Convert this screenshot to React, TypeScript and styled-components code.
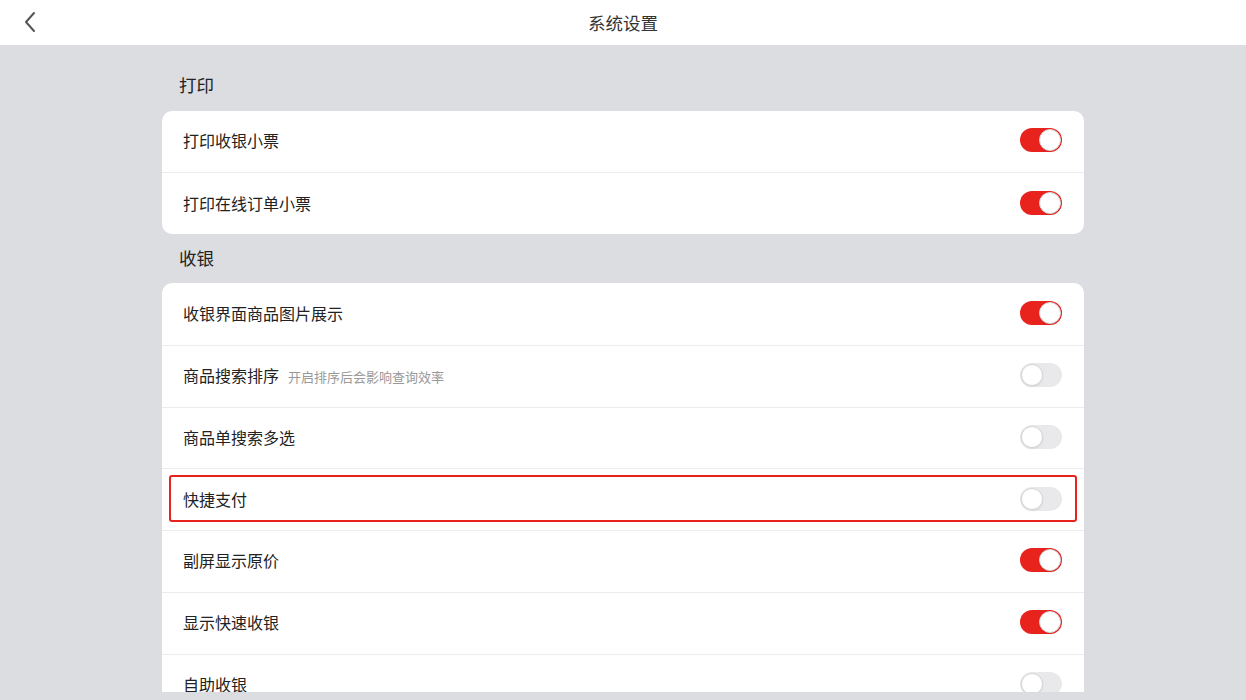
import React from "react";
import styled, { createGlobalStyle } from "styled-components";

const Global = createGlobalStyle`
  html, body { margin: 0; padding: 0; }
  body {
    font-family: "Noto Sans CJK SC", "Noto Sans", sans-serif;
    background: #dcdde1;
  }
`;

const Page = styled.div`
  width: 1246px;
  height: 700px;
  display: flex;
  flex-direction: column;
  background: #dcdde1;
  overflow: hidden;
`;

const Header = styled.header`
  height: 45px;
  flex: none;
  background: #ffffff;
  display: flex;
  align-items: center;
  justify-content: center;
  position: relative;
`;

const BackButton = styled.button`
  position: absolute;
  left: 18px;
  top: 10px;
  width: 24px;
  height: 24px;
  padding: 0;
  border: none;
  background: transparent;
  display: flex;
  align-items: center;
  justify-content: center;
`;

const Title = styled.h1`
  margin: 0;
  font-size: 17.5px;
  font-weight: 400;
  color: #333333;
`;

const Scroll = styled.main`
  flex: 1;
  margin-bottom: 8px;
  overflow: hidden;
  display: flex;
  flex-direction: column;
  align-items: center;
  padding-top: 16px;
`;

const Section = styled.section`
  width: 922px;
  display: flex;
  flex-direction: column;
`;

const SectionTitle = styled.h2`
  margin: 0;
  height: 49.5px;
  line-height: 48px;
  padding-left: 17px;
  font-size: 17.5px;
  font-weight: 400;
  color: #222222;
`;

const Card = styled.div`
  background: #ffffff;
  border-radius: 10px;
  overflow: hidden;
  display: flex;
  flex-direction: column;
`;

const Row = styled.div<{ $highlight?: boolean }>`
  position: relative;
  height: 61.7px;
  box-sizing: border-box;
  flex: none;
  display: flex;
  align-items: center;
  padding: 0 22px 2px 21px;
  border-top: 1px solid #ececee;
  &:first-child { border-top: none; }
  ${(p) =>
    p.$highlight &&
    `
    &::after {
      content: "";
      position: absolute;
      left: 7px;
      right: 7px;
      top: 6px;
      bottom: 8px;
      border: 2.5px solid #e8231e;
      border-radius: 3px;
      pointer-events: none;
    }
  `}
`;

const Label = styled.span`
  flex: 1;
  font-size: 16px;
  color: #222222;
  display: flex;
  align-items: baseline;
  gap: 9px;
`;

const Hint = styled.span`
  font-size: 13px;
  color: #999999;
`;

const Track = styled.span<{ $on: boolean }>`
  width: 42px;
  height: 24px;
  border-radius: 12px;
  box-sizing: border-box;
  background: ${(p) => (p.$on ? "#e8231e" : "#e9e9eb")};
  display: flex;
  align-items: center;
  justify-content: ${(p) => (p.$on ? "flex-end" : "flex-start")};
  padding: 0 1px;
`;

const Knob = styled.span`
  width: 22px;
  height: 22px;
  border-radius: 50%;
  background: #ffffff;
  box-sizing: border-box;
  border: 1px solid #d6d6d8;
  box-shadow: 0 1px 2px rgba(0, 0, 0, 0.08);
`;

const Toggle = ({ on }: { on: boolean }) => (
  <Track $on={on}>
    <Knob />
  </Track>
);

type Item = { label: string; hint?: string; on: boolean; highlight?: boolean };

const sections: { title: string; items: Item[] }[] = [
  {
    title: "打印",
    items: [
      { label: "打印收银小票", on: true },
      { label: "打印在线订单小票", on: true },
    ],
  },
  {
    title: "收银",
    items: [
      { label: "收银界面商品图片展示", on: true },
      { label: "商品搜索排序", hint: "开启排序后会影响查询效率", on: false },
      { label: "商品单搜索多选", on: false },
      { label: "快捷支付", on: false, highlight: true },
      { label: "副屏显示原价", on: true },
      { label: "显示快速收银", on: true },
      { label: "自助收银", on: false },
    ],
  },
];

export default function App() {
  return (
    <>
      <Global />
      <Page>
        <Header>
          <BackButton aria-label="返回">
            <svg width="14" height="22" viewBox="0 0 14 22" fill="none">
              <path d="M11 2 L3 11 L11 20" stroke="#555" strokeWidth="2" strokeLinecap="round" strokeLinejoin="round" />
            </svg>
          </BackButton>
          <Title>系统设置</Title>
        </Header>
        <Scroll>
          {sections.map((s) => (
            <Section key={s.title}>
              <SectionTitle>{s.title}</SectionTitle>
              <Card>
                {s.items.map((it) => (
                  <Row key={it.label} $highlight={it.highlight}>
                    <Label>
                      {it.label}
                      {it.hint && <Hint>{it.hint}</Hint>}
                    </Label>
                    <Toggle on={it.on} />
                  </Row>
                ))}
              </Card>
            </Section>
          ))}
        </Scroll>
      </Page>
    </>
  );
}
